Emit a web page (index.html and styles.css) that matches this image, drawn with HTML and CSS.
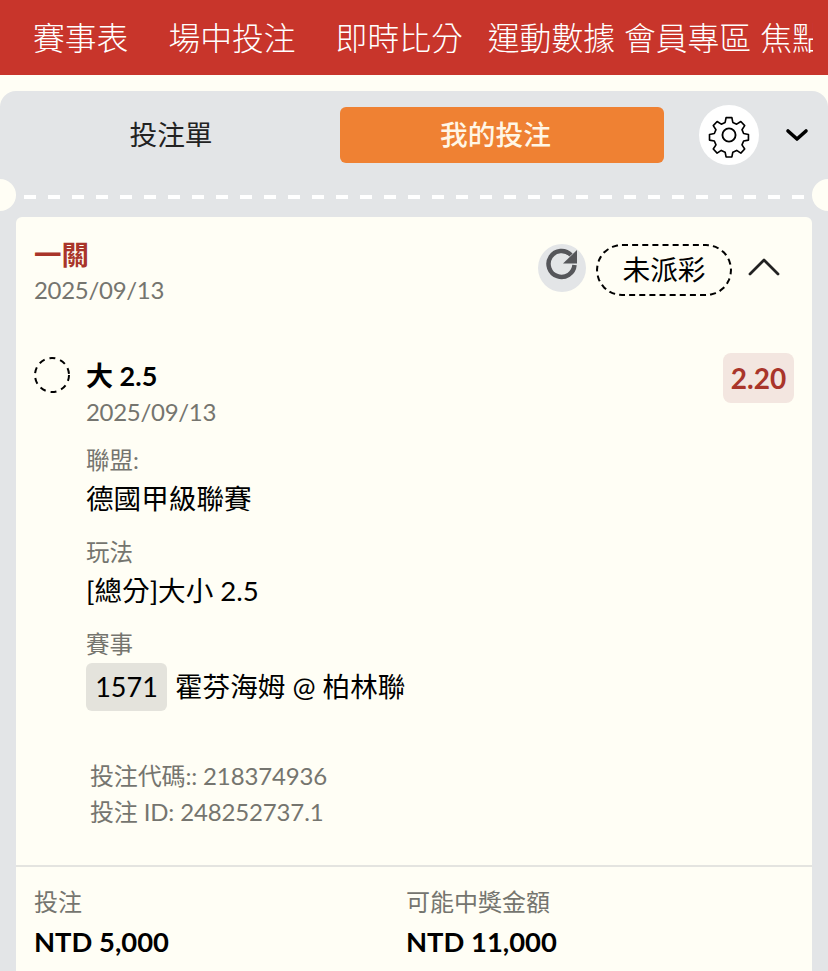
FILE: index.html
```html
<!DOCTYPE html>
<html lang="zh-Hant">
<head>
  <meta charset="UTF-8">
  <meta name="viewport" content="width=device-width, initial-scale=1.0">
  <title>我的投注</title>
  <link rel="stylesheet" href="styles.css">
</head>
<body>
  <!-- Top navigation -->
  <nav class="top-nav">
    <div class="nav-scroll">
      <a class="nav-item nav-wide">賽事表</a>
      <a class="nav-item nav-wide">場中投注</a>
      <a class="nav-item nav-mid">即時比分</a>
      <a class="nav-item">運動數據</a>
      <a class="nav-item">會員專區</a>
      <a class="nav-item">焦點</a>
    </div>
  </nav>

  <div class="panel">
    <!-- Tabs -->
    <div class="tabs">
      <div class="tab">投注單</div>
      <div class="tab tab-active">我的投注</div>
      <div class="gear-btn">
        <svg width="46" height="46" viewBox="0 0 42 42" fill="none" stroke="#000" stroke-width="1.700" stroke-linejoin="round">
          <path d="M18 3h6l1 5 4 1.800 4.300-2.800 4 4.300-2.800 4.200 1.700 4 5 1v5.800l-5 1-1.700 4 2.800 4.200-4 4.300-4.300-2.800-4 1.800-1 5h-6l-1-5-4-1.800-4.300 2.800-4-4.300 2.800-4.200-1.700-4-5-1v-5.800l5-1 1.700-4-2.800-4.200 4-4.300 4.300 2.800 4-1.800z" transform="translate(2.500 2.500) scale(.88)"/>
          <circle cx="21" cy="21" r="6"/>
        </svg>
      </div>
      <svg class="tabs-chevron" width="24" height="14" viewBox="0 0 24 14" fill="none" stroke="#000" stroke-width="3.600" stroke-linecap="round" stroke-linejoin="round">
        <path d="M3 3l9 8 9-8"/>
      </svg>
    </div>

    <!-- Perforated edge -->
    <div class="perforation">
      <span class="notch notch-left"></span>
      <span class="notch notch-right"></span>
    </div>

    <!-- Bet card -->
    <div class="card">
      <div class="card-head">
        <div>
          <div class="bet-type">一關</div>
          <div class="muted-date">2025/09/13</div>
        </div>
        <div class="head-actions">
          <div class="refresh-btn">
            <svg width="48" height="48" viewBox="0 0 48 48" fill="none">
              <path d="M33 11A13 13 0 1 0 36.500 21" stroke="#55565a" stroke-width="4.500"/>
              <path d="M39 6v13.500H25z" fill="#55565a"/>
            </svg>
          </div>
          <div class="status-pill">未派彩</div>
          <svg class="head-chevron" width="32" height="20" viewBox="0 0 32 20" fill="none" stroke="#222" stroke-width="2.800" stroke-linecap="round" stroke-linejoin="round">
            <path d="M2 17L16 3l14 14"/>
          </svg>
        </div>
      </div>

      <div class="selection">
        <svg class="status-dot" width="38" height="38" viewBox="0 0 38 38" fill="none" stroke="#000" stroke-width="2">
          <circle cx="19" cy="19" r="17" stroke-dasharray="6 5"/>
        </svg>
        <div class="selection-body">
          <div class="selection-top">
            <div>
              <div class="selection-name">大 2.5</div>
              <div class="muted-date">2025/09/13</div>
            </div>
            <div class="odds">2.20</div>
          </div>

          <div class="field-label field-first">聯盟:</div>
          <div class="field-value">德國甲級聯賽</div>
          <div class="field-label">玩法</div>
          <div class="field-value">[總分]大小 2.5</div>
          <div class="field-label">賽事</div>
          <div class="match-row">
            <span class="match-no">1571</span>
            <span class="field-value">霍芬海姆 @ 柏林聯</span>
          </div>
        </div>
      </div>

      <div class="codes">
        <div>投注代碼:: 218374936</div>
        <div>投注 ID: 248252737.1</div>
      </div>

      <div class="totals">
        <div class="total-col">
          <div class="total-label">投注</div>
          <div class="total-value">NTD 5,000</div>
        </div>
        <div class="total-col">
          <div class="total-label">可能中獎金額</div>
          <div class="total-value">NTD 11,000</div>
        </div>
      </div>
    </div>
  </div>
</body>
</html>
```

FILE: styles.css
```css
html, body {
  height: 100%;
  overflow: hidden;
}

body {
  margin: 0;
  background-color: #fffef5;
  color: #000;
  font-family: Lato, "Noto Sans CJK TC", sans-serif;
}

.top-nav {
  height: 75px;
  padding: 0 15px 0 33px;
  background-color: #c8352b;
}

.nav-scroll {
  display: flex;
  align-items: center;
  height: 100%;
  overflow: hidden;
  white-space: nowrap;
}

.nav-item {
  flex: none;
  margin-right: 9px;
  color: #fff;
  font-size: 31.800px;
  line-height: 40px;
  font-weight: 300;
}

.nav-wide {
  margin-right: 40px;
}

.nav-mid {
  margin-right: 25px;
}

.panel {
  margin-top: 16px;
  padding: 0 16px;
  height: 880px;
  background-color: #e3e5e7;
  border-radius: 16px 16px 0 0;
}

.tabs {
  display: flex;
  align-items: center;
  height: 88px;
}

.tab {
  width: 310px;
  height: 56px;
  color: #222;
  font-size: 27.700px;
  line-height: 56px;
  text-align: center;
  border-radius: 6px;
}

.tab-active {
  box-sizing: border-box;
  width: 324px;
  margin-left: 14px;
  padding-right: 13px;
  background-color: #ef8133;
  color: #fff6e6;
  font-weight: 500;
}

.gear-btn {
  display: flex;
  align-items: center;
  justify-content: center;
  width: 60px;
  height: 60px;
  margin-left: 35px;
  background-color: #fff;
  border-radius: 50%;
}

.tabs-chevron {
  margin-left: 26px;
}

.perforation {
  position: relative;
  height: 38px;
  margin: 0 -16px;
  background-image: repeating-linear-gradient(90deg, #fff 0 12px, transparent 12px 24px);
  background-repeat: no-repeat;
  background-size: 780px 4px;
  background-position: 24px 16px;
}

.notch {
  position: absolute;
  top: 0;
  width: 32px;
  height: 32px;
  background-color: #fffef5;
  border-radius: 50%;
}

.notch-left {
  left: -16px;
}

.notch-right {
  right: -16px;
}

.card {
  height: 760px;
  background-color: #fffef5;
  border-radius: 6px 6px 0 0;
}

.card-head {
  display: flex;
  justify-content: space-between;
  padding: 20px 32px 0 18px;
}

.bet-type {
  color: #a9352a;
  font-size: 27.500px;
  line-height: 36px;
  font-weight: 700;
}

.muted-date {
  color: #75756f;
  font-size: 24px;
  line-height: 34px;
  letter-spacing: -0.3px;
}

.head-actions {
  display: flex;
  align-items: flex-start;
  margin-top: 7px;
}

.refresh-btn {
  width: 48px;
  height: 48px;
  background-color: #e3e5e7;
  border-radius: 50%;
}

.status-pill {
  width: 132px;
  height: 48px;
  margin-left: 10px;
  border: 2px dashed #000;
  border-radius: 26px;
  font-size: 27.700px;
  line-height: 48px;
  text-align: center;
}

.head-chevron {
  margin: 13px 0 0 16px;
}

.selection {
  display: flex;
  padding: 46px 18px 0 18px;
}

.status-dot {
  flex: none;
  margin-top: 3px;
  margin-left: -1px;
}

.selection-body {
  flex: 1;
  margin-left: 15px;
}

.selection-top {
  display: flex;
  justify-content: space-between;
}

.selection-name {
  padding-top: 4px;
  font-size: 27px;
  line-height: 38px;
  font-weight: 700;
}

.odds {
  width: 71px;
  height: 50px;
  background-color: #f3e6e0;
  border-radius: 8px;
  color: #a9352a;
  font-size: 28px;
  line-height: 50px;
  font-weight: 700;
  text-align: center;
}

.field-label {
  margin-top: 14px;
  color: #75756f;
  font-size: 23.500px;
  line-height: 34px;
}

.field-first {
  margin-top: 15px;
  line-height: 33px;
}

.field-value {
  font-size: 27.600px;
  line-height: 44px;
}

.match-row {
  display: flex;
  align-items: center;
  margin-top: 2px;
}

.match-no {
  width: 81px;
  height: 48px;
  margin-right: 8px;
  background-color: #e4e3dc;
  border-radius: 6px;
  font-size: 27px;
  line-height: 48px;
  text-align: center;
}

.codes {
  margin-top: 47px;
  padding: 0 0 35px 74px;
  color: #75756f;
  font-size: 24px;
  line-height: 36px;
  letter-spacing: -0.15px;
  border-bottom: 2px solid #e4e4e0;
}

.totals {
  display: flex;
  padding: 17px 18px 0;
}

.total-col {
  width: 372px;
}

.total-label {
  color: #75756f;
  font-size: 24px;
  line-height: 36px;
}

.total-value {
  font-size: 27.400px;
  line-height: 44px;
  font-weight: 700;
}
```
